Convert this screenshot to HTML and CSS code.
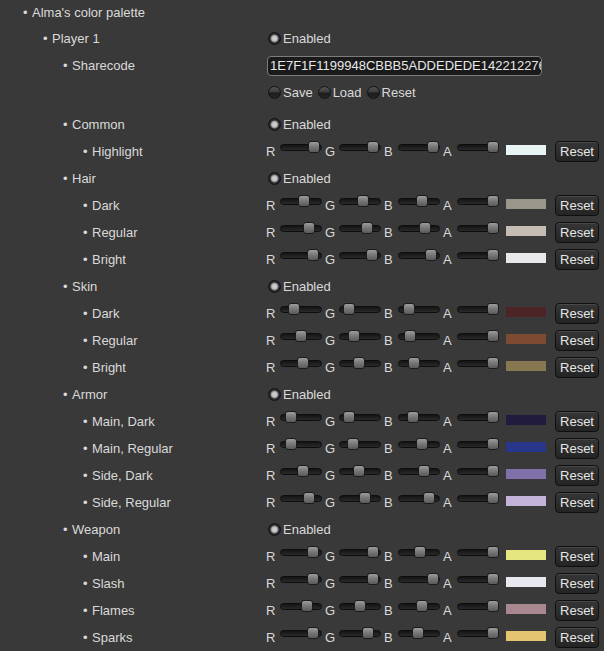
FILE: index.html
```html
<!DOCTYPE html>
<html>
<head>
<meta charset="utf-8">
<link rel="stylesheet" href="styles.css">
</head>
<body>
<div class="tree">
  <div class="row first l0"><span class="label">Alma's color palette</span></div>
  <div class="row l1"><span class="label">Player 1</span><div class="ctrl"><span class="opt"><span class="toggle on"></span>Enabled</span></div></div>
  <div class="row l2"><span class="label">Sharecode</span><div class="ctrl"><input class="code" type="text" readonly value="1E7F1F1199948CBBB5ADDEDEDE142212276E3A4C8E7F52"></div></div>
  <div class="row gap"><span class="label nob"></span><div class="ctrl"><span class="opt"><span class="toggle"></span>Save</span><span class="opt"><span class="toggle"></span>Load</span><span class="opt"><span class="toggle"></span>Reset</span></div></div>

  <div class="row l2"><span class="label">Common</span><div class="ctrl"><span class="opt"><span class="toggle on"></span>Enabled</span></div></div>
  <div class="row l3"><span class="label">Highlight</span><div class="ctrl">
    <span class="ch">R</span><span class="track"><span class="thumb" style="--x:27.7"></span></span>
    <span class="ch">G</span><span class="track"><span class="thumb" style="--x:28"></span></span>
    <span class="ch">B</span><span class="track"><span class="thumb" style="--x:28.7"></span></span>
    <span class="ch">A</span><span class="track"><span class="thumb" style="--x:30"></span></span>
    <span class="sw" style="background:#e9f4f5"></span><button class="btn">Reset</button></div></div>

  <div class="row l2"><span class="label">Hair</span><div class="ctrl"><span class="opt"><span class="toggle on"></span>Enabled</span></div></div>
  <div class="row l3"><span class="label">Dark</span><div class="ctrl">
    <span class="ch">R</span><span class="track"><span class="thumb" style="--x:17.7"></span></span>
    <span class="ch">G</span><span class="track"><span class="thumb" style="--x:17.7"></span></span>
    <span class="ch">B</span><span class="track"><span class="thumb" style="--x:17.7"></span></span>
    <span class="ch">A</span><span class="track"><span class="thumb" style="--x:30"></span></span>
    <span class="sw" style="background:#9b968c"></span><button class="btn">Reset</button></div></div>
  <div class="row l3"><span class="label">Regular</span><div class="ctrl">
    <span class="ch">R</span><span class="track"><span class="thumb" style="--x:23"></span></span>
    <span class="ch">G</span><span class="track"><span class="thumb" style="--x:22"></span></span>
    <span class="ch">B</span><span class="track"><span class="thumb" style="--x:21"></span></span>
    <span class="ch">A</span><span class="track"><span class="thumb" style="--x:30"></span></span>
    <span class="sw" style="background:#c5bdb4"></span><button class="btn">Reset</button></div></div>
  <div class="row l3"><span class="label">Bright</span><div class="ctrl">
    <span class="ch">R</span><span class="track"><span class="thumb" style="--x:27.3"></span></span>
    <span class="ch">G</span><span class="track"><span class="thumb" style="--x:27.3"></span></span>
    <span class="ch">B</span><span class="track"><span class="thumb" style="--x:27.3"></span></span>
    <span class="ch">A</span><span class="track"><span class="thumb" style="--x:30"></span></span>
    <span class="sw" style="background:#e8e8ea"></span><button class="btn">Reset</button></div></div>

  <div class="row l2"><span class="label">Skin</span><div class="ctrl"><span class="opt"><span class="toggle on"></span>Enabled</span></div></div>
  <div class="row l3"><span class="label">Dark</span><div class="ctrl">
    <span class="ch">R</span><span class="track"><span class="thumb" style="--x:8.3"></span></span>
    <span class="ch">G</span><span class="track"><span class="thumb" style="--x:4.3"></span></span>
    <span class="ch">B</span><span class="track"><span class="thumb" style="--x:4.7"></span></span>
    <span class="ch">A</span><span class="track"><span class="thumb" style="--x:30"></span></span>
    <span class="sw" style="background:#4d2425"></span><button class="btn">Reset</button></div></div>
  <div class="row l3"><span class="label">Regular</span><div class="ctrl">
    <span class="ch">R</span><span class="track"><span class="thumb" style="--x:15"></span></span>
    <span class="ch">G</span><span class="track"><span class="thumb" style="--x:9.3"></span></span>
    <span class="ch">B</span><span class="track"><span class="thumb" style="--x:6.3"></span></span>
    <span class="ch">A</span><span class="track"><span class="thumb" style="--x:30"></span></span>
    <span class="sw" style="background:#7d4b31"></span><button class="btn">Reset</button></div></div>
  <div class="row l3"><span class="label">Bright</span><div class="ctrl">
    <span class="ch">R</span><span class="track"><span class="thumb" style="--x:16.7"></span></span>
    <span class="ch">G</span><span class="track"><span class="thumb" style="--x:14.3"></span></span>
    <span class="ch">B</span><span class="track"><span class="thumb" style="--x:9.7"></span></span>
    <span class="ch">A</span><span class="track"><span class="thumb" style="--x:30"></span></span>
    <span class="sw" style="background:#877852"></span><button class="btn">Reset</button></div></div>

  <div class="row l2"><span class="label">Armor</span><div class="ctrl"><span class="opt"><span class="toggle on"></span>Enabled</span></div></div>
  <div class="row l3"><span class="label">Main, Dark</span><div class="ctrl">
    <span class="ch">R</span><span class="track"><span class="thumb" style="--x:5"></span></span>
    <span class="ch">G</span><span class="track"><span class="thumb" style="--x:3.7"></span></span>
    <span class="ch">B</span><span class="track"><span class="thumb" style="--x:8.7"></span></span>
    <span class="ch">A</span><span class="track"><span class="thumb" style="--x:30"></span></span>
    <span class="sw" style="background:#211c3e"></span><button class="btn">Reset</button></div></div>
  <div class="row l3"><span class="label">Main, Regular</span><div class="ctrl">
    <span class="ch">R</span><span class="track"><span class="thumb" style="--x:5"></span></span>
    <span class="ch">G</span><span class="track"><span class="thumb" style="--x:8.3"></span></span>
    <span class="ch">B</span><span class="track"><span class="thumb" style="--x:17.7"></span></span>
    <span class="ch">A</span><span class="track"><span class="thumb" style="--x:30"></span></span>
    <span class="sw" style="background:#28378c"></span><button class="btn">Reset</button></div></div>
  <div class="row l3"><span class="label">Side, Dark</span><div class="ctrl">
    <span class="ch">R</span><span class="track"><span class="thumb" style="--x:16.7"></span></span>
    <span class="ch">G</span><span class="track"><span class="thumb" style="--x:14.3"></span></span>
    <span class="ch">B</span><span class="track"><span class="thumb" style="--x:20.3"></span></span>
    <span class="ch">A</span><span class="track"><span class="thumb" style="--x:30"></span></span>
    <span class="sw" style="background:#8072a8"></span><button class="btn">Reset</button></div></div>
  <div class="row l3"><span class="label">Side, Regular</span><div class="ctrl">
    <span class="ch">R</span><span class="track"><span class="thumb" style="--x:22.7"></span></span>
    <span class="ch">G</span><span class="track"><span class="thumb" style="--x:20.3"></span></span>
    <span class="ch">B</span><span class="track"><span class="thumb" style="--x:25.3"></span></span>
    <span class="ch">A</span><span class="track"><span class="thumb" style="--x:30"></span></span>
    <span class="sw" style="background:#c4b4d9"></span><button class="btn">Reset</button></div></div>

  <div class="row l2"><span class="label">Weapon</span><div class="ctrl"><span class="opt"><span class="toggle on"></span>Enabled</span></div></div>
  <div class="row l3"><span class="label">Main</span><div class="ctrl">
    <span class="ch">R</span><span class="track"><span class="thumb" style="--x:27.3"></span></span>
    <span class="ch">G</span><span class="track"><span class="thumb" style="--x:27.7"></span></span>
    <span class="ch">B</span><span class="track"><span class="thumb" style="--x:16.3"></span></span>
    <span class="ch">A</span><span class="track"><span class="thumb" style="--x:30"></span></span>
    <span class="sw" style="background:#e6e680"></span><button class="btn">Reset</button></div></div>
  <div class="row l3"><span class="label">Slash</span><div class="ctrl">
    <span class="ch">R</span><span class="track"><span class="thumb" style="--x:27.3"></span></span>
    <span class="ch">G</span><span class="track"><span class="thumb" style="--x:27.7"></span></span>
    <span class="ch">B</span><span class="track"><span class="thumb" style="--x:28.7"></span></span>
    <span class="ch">A</span><span class="track"><span class="thumb" style="--x:30"></span></span>
    <span class="sw" style="background:#e8e8f0"></span><button class="btn">Reset</button></div></div>
  <div class="row l3"><span class="label">Flames</span><div class="ctrl">
    <span class="ch">R</span><span class="track"><span class="thumb" style="--x:20.7"></span></span>
    <span class="ch">G</span><span class="track"><span class="thumb" style="--x:15.3"></span></span>
    <span class="ch">B</span><span class="track"><span class="thumb" style="--x:17.7"></span></span>
    <span class="ch">A</span><span class="track"><span class="thumb" style="--x:30"></span></span>
    <span class="sw" style="background:#a8888e"></span><button class="btn">Reset</button></div></div>
  <div class="row l3"><span class="label">Sparks</span><div class="ctrl">
    <span class="ch">R</span><span class="track"><span class="thumb" style="--x:27.3"></span></span>
    <span class="ch">G</span><span class="track"><span class="thumb" style="--x:22.7"></span></span>
    <span class="ch">B</span><span class="track"><span class="thumb" style="--x:13.7"></span></span>
    <span class="ch">A</span><span class="track"><span class="thumb" style="--x:30"></span></span>
    <span class="sw" style="background:#e5c470"></span><button class="btn">Reset</button></div></div>
</div>
</body>
</html>
```
FILE: styles.css
```css
html, body {
  margin: 0;
  background: #393939;
}
body {
  font-family: "Liberation Sans", Arial, sans-serif;
  font-size: 13px;
  color: #d9d9d9;
  overflow: hidden;
}
.row {
  display: flex;
  align-items: center;
  height: 27px;
}
.row.first { height: 25px; }
.row.gap { margin-bottom: 5px; }
.label {
  flex: none;
  width: 266px;
  box-sizing: border-box;
  white-space: nowrap;
}
.label::before {
  content: "\2022";
  display: inline-block;
  width: 9px;
}
.label.nob::before { content: none; }
.l0 .label { padding-left: 23px; }
.l1 .label { padding-left: 43px; }
.l2 .label { padding-left: 63px; }
.l3 .label { padding-left: 83px; }
.ctrl {
  display: flex;
  align-items: center;
  white-space: nowrap;
}
.opt {
  display: inline-flex;
  align-items: center;
  margin-right: 3px;
}
.toggle {
  width: 13px;
  height: 13px;
  box-sizing: border-box;
  border-radius: 50%;
  border: 1px solid #141414;
  margin: 0 2px 0 2px;
  background: linear-gradient(#555 0%, #3c3c3c 45%, #1c1c1c 55%, #272727 100%);
}
.toggle.on {
  background: radial-gradient(circle at 50% 50%, #d6d6d6 0, #bdbdbd 2.6px, #7e7e7e 3.6px, #2b2b2b 4.4px, #1f1f1f 100%);
}
.code {
  margin: 0 0 0 1px;
  width: 275px;
  height: 20px;
  box-sizing: border-box;
  border: 1px solid #7c7c7c;
  border-radius: 4px;
  background: #1a1a1a;
  color: #e8e8e8;
  font: inherit;
  padding: 0 0 0 2px;
  outline: none;
}
.ch {
  flex: none;
  width: 14px;
}
.track {
  flex: none;
  position: relative;
  width: 42px;
  height: 7px;
  box-sizing: border-box;
  border-radius: 4px;
  border: 1px solid #0d0d0d;
  background: linear-gradient(#141414, #2a2a2a);
  margin: 0 3px 8px 0;
}
.thumb {
  position: absolute;
  top: -4px;
  left: calc(var(--x) * 1px - 1px);
  width: 12px;
  height: 12px;
  box-sizing: border-box;
  border: 1px solid #1b1b1b;
  border-radius: 3px;
  background: linear-gradient(#9c9c9c 0%, #7a7a7a 45%, #5a5a5a 100%);
}
.sw {
  flex: none;
  width: 40px;
  height: 10px;
  margin: 0 9px 4px 4px;
}
.btn {
  flex: none;
  width: 44px;
  height: 21px;
  box-sizing: border-box;
  margin: 0;
  padding: 0;
  border: 1px solid #0f0f0f;
  border-radius: 4px;
  background: linear-gradient(#363636, #242424);
  box-shadow: inset 0 1px 0 #484848;
  color: #e6e6e6;
  font: inherit;
  text-align: center;
}
```
